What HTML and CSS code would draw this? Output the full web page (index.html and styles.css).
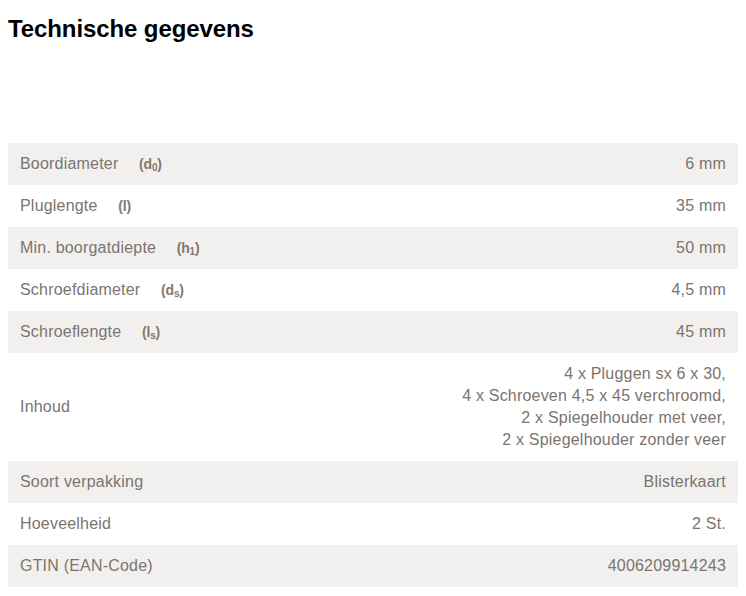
FILE: index.html
```html
<!DOCTYPE html>
<html lang="nl">
<head>
<meta charset="utf-8">
<title>Technische gegevens</title>
<link rel="stylesheet" href="styles.css">
</head>
<body>
<section class="specs">
  <h2 class="specs-title">Technische gegevens</h2>
  <table class="specs-table">
    <tbody>
      <tr><td class="label">Boordiameter <span class="sym">(d<sub>0</sub>)</span></td><td class="value">6 mm</td></tr>
      <tr><td class="label">Pluglengte <span class="sym">(l)</span></td><td class="value">35 mm</td></tr>
      <tr><td class="label">Min. boorgatdiepte <span class="sym">(h<sub>1</sub>)</span></td><td class="value">50 mm</td></tr>
      <tr><td class="label">Schroefdiameter <span class="sym">(d<sub>s</sub>)</span></td><td class="value">4,5 mm</td></tr>
      <tr><td class="label">Schroeflengte <span class="sym">(l<sub>s</sub>)</span></td><td class="value">45 mm</td></tr>
      <tr><td class="label">Inhoud</td><td class="value">4 x Pluggen sx 6 x 30,<br>4 x Schroeven 4,5 x 45 verchroomd,<br>2 x Spiegelhouder met veer,<br>2 x Spiegelhouder zonder veer</td></tr>
      <tr><td class="label">Soort verpakking</td><td class="value">Blisterkaart</td></tr>
      <tr><td class="label">Hoeveelheid</td><td class="value">2 St.</td></tr>
      <tr><td class="label">GTIN (EAN-Code)</td><td class="value">4006209914243</td></tr>
    </tbody>
  </table>
</section>
</body>
</html>
```
FILE: styles.css
```css
html, body {
  margin: 0;
  background: #ffffff;
}
body {
  padding: 8px;
  font-family: "Liberation Sans", Arial, sans-serif;
}
.specs-title {
  margin: 7px 0 0;
  font-size: 24px;
  line-height: 28px;
  font-weight: 700;
  color: #000000;
  letter-spacing: -0.1px;
}
.specs-table {
  margin-top: 100px;
  width: 100%;
  border-collapse: collapse;
  font-size: 16px;
  line-height: 22px;
  color: #7b746f;
  letter-spacing: 0.2px;
}
.specs-table tr:nth-child(odd) {
  background: #f2f0ee;
}
.specs-table td {
  padding: 10px 12px;
  height: 22px;
  vertical-align: middle;
}
.value {
  text-align: right;
}
.sym {
  margin-left: 16px;
  font-size: 14px;
  line-height: 1;
  font-weight: 700;
  letter-spacing: -0.2px;
  color: #84786d;
}
.sym sub {
  font-size: 10px;
  line-height: 0;
  vertical-align: -2px;
}
```
